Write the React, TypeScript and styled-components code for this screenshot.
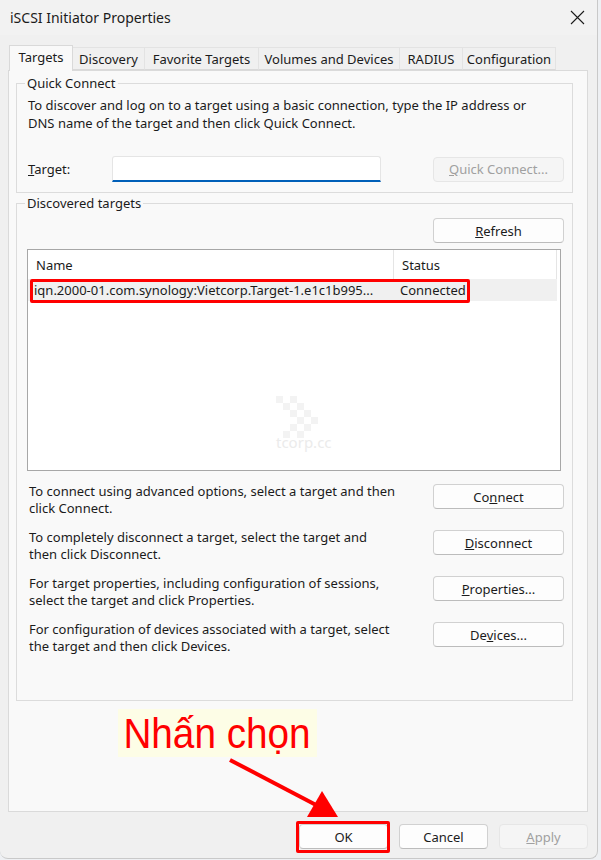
import React from 'react';
import styled, {createGlobalStyle} from 'styled-components';

const GlobalStyle = createGlobalStyle`
    body {
        margin: 0;
        background: #eef0f3;
        font-family: "Noto Sans", "Open Sans", sans-serif;
        font-size: 13px;
        color: #1b1b1b;
    }
`;

const Window = styled.div`
    position: relative;
    box-sizing: border-box;
    width: 598px;
    height: 859px;
    background: #f0f0f0;
    border-right: 1px solid #c9c9c9;
    border-bottom: 1px solid #c9c9c9;
    border-radius: 0 0 8px 8px;
    display: flex;
    flex-direction: column;
`;

const TitleBar = styled.div`
    height: 35px;
    display: flex;
    align-items: center;
    justify-content: space-between;
    padding: 0 12px 0 10px;
    background: #f2f2f2;
    font-size: 14px;
`;

const TabStrip = styled.div`
    height: 35px;
    display: flex;
    align-items: flex-end;
    padding-left: 9px;
`;

const Tab = styled.div<{$w: number; $active?: boolean}>`
    box-sizing: border-box;
    width: ${p => p.$w}px;
    height: ${p => (p.$active ? 26 : 23)}px;
    margin-bottom: ${p => (p.$active ? -1 : 0)}px;
    display: flex;
    align-items: center;
    justify-content: center;
    padding-bottom: ${p => (p.$active ? 3 : 0)}px;
    white-space: nowrap;
    background: ${p => (p.$active ? '#f9f9f9' : '#f0f0f0')};
    border: 1px solid ${p => (p.$active ? '#d9d9d9' : '#e3e3e3')};
    border-bottom: ${p => (p.$active ? 'none' : '1px solid #d9d9d9')};
    border-left: ${p => (p.$active ? '1px solid #d9d9d9' : 'none')};
    position: relative;
    z-index: ${p => (p.$active ? 1 : 0)};
`;

const Panel = styled.div`
    box-sizing: border-box;
    margin-left: 8px;
    width: 580px;
    height: 742px;
    background: #f9f9f9;
    border: 1px solid #dadada;
    padding: 4px 14px 0 7px;
    display: flex;
    flex-direction: column;
    gap: 2px;
`;

const Group = styled.fieldset<{$h: number}>`
    box-sizing: border-box;
    height: ${p => p.$h}px;
    margin: 0;
    padding: 0 8px 0 11px;
    border: 1px solid #dcdcdc;
    display: flex;
    flex-direction: column;
`;

const Legend = styled.legend`
    margin-left: -3px;
    padding: 0 2px;
    line-height: 17px;
`;

const Text = styled.p<{$lh?: number}>`
    margin: 0;
    line-height: ${p => p.$lh ?? 18}px;
`;

const Description = styled(Text)`
    margin-top: 4px;
`;

const FormRow = styled.div`
    display: flex;
    align-items: center;
    justify-content: space-between;
    margin-top: 24px;
`;

const Label = styled.label`
    width: 84px;
`;

const Input = styled.input`
    box-sizing: border-box;
    width: 269px;
    height: 26px;
    margin-right: auto;
    background: #ffffff;
    border: 1px solid #e5e5e5;
    border-bottom: 2px solid #005fb8;
    border-radius: 3px 3px 0 0;
    outline: none;
`;

const Button = styled.button<{$w?: number; $disabled?: boolean}>`
    box-sizing: border-box;
    width: ${p => p.$w ?? 131}px;
    height: 25px;
    padding: 0;
    font-family: inherit;
    font-size: 13px;
    color: ${p => (p.$disabled ? '#a0a0a0' : '#1b1b1b')};
    background: ${p => (p.$disabled ? '#f5f5f5' : '#fdfdfd')};
    border: 1px solid ${p => (p.$disabled ? '#e6e6e6' : '#d1d1d1')};
    border-bottom-color: ${p => (p.$disabled ? '#e6e6e6' : '#bcbcbc')};
    border-radius: 4px;
    flex-shrink: 0;
`;

const RefreshRow = styled.div`
    display: flex;
    justify-content: flex-end;
    margin-top: 6px;
`;

const ListView = styled.div`
    position: relative;
    box-sizing: border-box;
    height: 222px;
    margin: 6px 3px 0 -1px;
    background: #ffffff;
    border: 1px solid #a7a7a7;
`;

const ListRow = styled.div<{$header?: boolean}>`
    display: grid;
    grid-template-columns: 366px 163px;
    height: ${p => (p.$header ? 29 : 22)}px;
    background: ${p => (p.$header ? '#ffffff' : '#f0f0f0')};
    margin-right: 3px;
`;

const Cell = styled.div<{$header?: boolean}>`
    display: flex;
    align-items: center;
    padding-left: ${p => (p.$header ? 8 : 6)}px;
    border-right: ${p => (p.$header ? '1px solid #e5e5e5' : 'none')};
    white-space: nowrap;
    overflow: hidden;
`;

const Watermark = styled.div`
    position: absolute;
    left: 248px;
    top: 146px;
    width: 50px;
    height: 64px;
    color: #ebebeb;
    font-size: 15px;
`;

const WatermarkText = styled.div`
    margin-top: -12px;
`;

const Actions = styled.div`
    display: flex;
    flex-direction: column;
    gap: 12px;
    margin-top: 13px;
    padding-left: 1px;
`;

const ActionRow = styled.div`
    display: flex;
    justify-content: space-between;
    align-items: flex-start;
    min-height: 34px;
`;

const ActionText = styled(Text)`
    margin-top: -1px;
`;

const Footer = styled.div`
    display: flex;
    justify-content: flex-end;
    gap: 11px;
    padding: 12px 9px 0 0;
`;

const Highlight = styled.div<{$x: number; $y: number; $w: number; $h: number}>`
    position: absolute;
    left: ${p => p.$x}px;
    top: ${p => p.$y}px;
    width: ${p => p.$w}px;
    height: ${p => p.$h}px;
    box-sizing: border-box;
    border: 3px solid #ff0000;
    border-radius: 2px;
    pointer-events: none;
`;

const Callout = styled.div`
    position: absolute;
    left: 118px;
    top: 709px;
    width: 199px;
    height: 48px;
    background: #fdfde6;
    overflow: hidden;
`;

const CalloutText = styled.div`
    font-family: "Liberation Sans", Arial, sans-serif;
    font-size: 43px;
    line-height: 48px;
    color: #ff0000;
    white-space: nowrap;
    transform: scaleX(0.9);
    transform-origin: left center;
    padding-left: 6px;
`;

const ArrowLayer = styled.svg`
    position: absolute;
    left: 0;
    top: 0;
    pointer-events: none;
`;

const actions = [
    {l1: 'To connect using advanced options, select a target and then', l2: 'click Connect.', btn: <>Co<u>n</u>nect</>},
    {l1: 'To completely disconnect a target, select the target and', l2: 'then click Disconnect.', btn: <><u>D</u>isconnect</>},
    {l1: 'For target properties, including configuration of sessions,', l2: 'select the target and click Properties.', btn: <><u>P</u>roperties...</>},
    {l1: 'For configuration of devices associated with a target, select', l2: 'the target and then click Devices.', btn: <>De<u>v</u>ices...</>},
];

const tabs = [
    {name: 'Targets', w: 64},
    {name: 'Discovery', w: 72},
    {name: 'Favorite Targets', w: 114},
    {name: 'Volumes and Devices', w: 141},
    {name: 'RADIUS', w: 63},
    {name: 'Configuration', w: 93},
];

const checker = [[0, 0], [14, 0], [7, 7], [21, 7], [14, 14], [28, 14], [21, 21], [35, 21], [14, 28], [28, 28], [7, 35], [21, 35]];

export default function App() {
    return (
        <>
            <GlobalStyle />
            <Window>
                <TitleBar>
                    <span>iSCSI Initiator Properties</span>
                    <svg width="15" height="15" viewBox="0 0 15 15">
                        <path d="M1 1 L14 14 M14 1 L1 14" stroke="#1b1b1b" strokeWidth="1.1" />
                    </svg>
                </TitleBar>
                <TabStrip>
                    {tabs.map((t, i) => (
                        <Tab key={t.name} $w={t.w} $active={i === 0}>{t.name}</Tab>
                    ))}
                </TabStrip>
                <Panel>
                    <Group $h={118}>
                        <Legend>Quick Connect</Legend>
                        <Description>
                            To discover and log on to a target using a basic connection, type the IP address or<br />
                            DNS name of the target and then click Quick Connect.
                        </Description>
                        <FormRow>
                            <Label><u>T</u>arget:</Label>
                            <Input />
                            <Button $disabled><u>Q</u>uick Connect...</Button>
                        </FormRow>
                    </Group>
                    <Group $h={506}>
                        <Legend>Discovered targets</Legend>
                        <RefreshRow>
                            <Button><u>R</u>efresh</Button>
                        </RefreshRow>
                        <ListView>
                            <ListRow $header>
                                <Cell $header>Name</Cell>
                                <Cell $header>Status</Cell>
                            </ListRow>
                            <ListRow>
                                <Cell>iqn.2000-01.com.synology:Vietcorp.Target-1.e1c1b995...</Cell>
                                <Cell>Connected</Cell>
                            </ListRow>
                            <Watermark>
                                <svg width="50" height="44" viewBox="0 0 50 44">
                                    {checker.map(([x, y]) => (
                                        <rect key={`${x}-${y}`} x={x} y={y} width="7" height="7" fill="#f3f3f3" />
                                    ))}
                                </svg>
                                <WatermarkText>tcorp.cc</WatermarkText>
                            </Watermark>
                        </ListView>
                        <Actions>
                            {actions.map(a => (
                                <ActionRow key={a.l1}>
                                    <ActionText $lh={17}>{a.l1}<br />{a.l2}</ActionText>
                                    <Button>{a.btn}</Button>
                                </ActionRow>
                            ))}
                        </Actions>
                    </Group>
                </Panel>
                <Footer>
                    <Button $w={89}>OK</Button>
                    <Button $w={89}>Cancel</Button>
                    <Button $w={89} $disabled><u>A</u>pply</Button>
                </Footer>
                <Highlight $x={30} $y={279} $w={440} $h={24} />
                <Highlight $x={296} $y={821} $w={94} $h={32} />
                <Callout>
                    <CalloutText>Nhấn chọn</CalloutText>
                </Callout>
                <ArrowLayer width="598" height="859">
                    <line x1="230" y1="760" x2="318" y2="806" stroke="#ff0000" strokeWidth="4" />
                    <polygon points="338,817 307,817 322,791" fill="#ff0000" />
                </ArrowLayer>
            </Window>
        </>
    );
}
